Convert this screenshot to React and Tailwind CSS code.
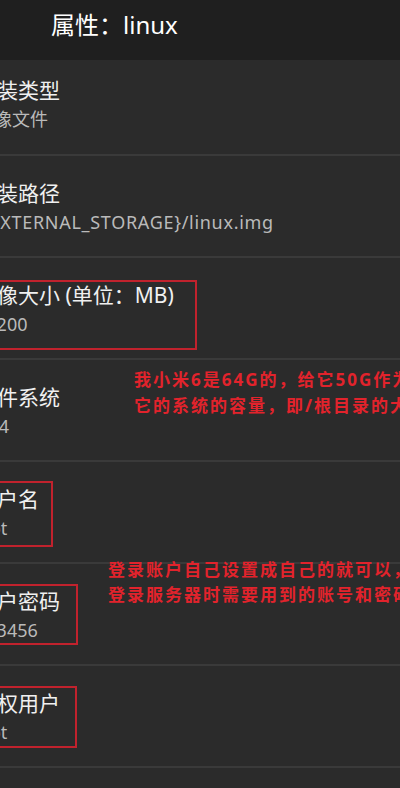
import React from 'react';

const FONT = { fontFamily: '"Noto Sans", "Noto Sans CJK SC", sans-serif' };

const rows = [
  { title: '安装类型', value: '镜像文件', first: true },
  { title: '安装路径', value: '${EXTERNAL_STORAGE}/linux.img', vx: 'ml-[-5px] tracking-[0.7px]' },
  { title: '镜像大小 (单位：MB)', value: '51200', box: 'top-[22px] h-[70px] w-[227px]' },
  { title: '文件系统', value: 'ext4', vx: 'ml-[-3px]' },
  { title: '用户名', value: 'root', vx: 'ml-[-4px]', box: 'top-[19px] h-[66px] w-[83px]' },
  { title: '用户密码', value: '123456', box: 'top-[20px] h-[61px] w-[108px]' },
  { title: '特权用户', value: 'root', vx: 'ml-[-4px]', box: 'top-[20px] h-[62px] w-[107px]' },
];

function Row({ title, value, first, box, vx = '' }) {
  return (
    <div className={first ? 'relative h-[94px] pt-[17px]' : 'relative h-[100px] pt-[24px]'}>
      <div className="ml-[-24px] flex flex-col gap-1">
        <div className="text-[21px] leading-[26px] text-[#f0f0f0] whitespace-nowrap">{title}</div>
        <div className={`text-[18px] leading-[24px] text-[#bababa] whitespace-nowrap ${vx}`}>{value}</div>
      </div>
      {box && <div className={`absolute left-[-30px] border-2 border-[#c1222d] ${box}`} />}
    </div>
  );
}

export default function App() {
  return (
    <div className="relative w-[400px] h-[788px] overflow-hidden bg-[#2b2b2b]" style={FONT}>
      {/* toolbar */}
      <div className="relative h-[60px] bg-[#1f1f1f] flex items-center">
        <svg className="absolute left-[-19px] top-[13px]" width="22" height="22" viewBox="0 0 24 24" fill="none" stroke="#cfcfcf" strokeWidth="2">
          <path d="M20 12H4M11 5l-7 7 7 7" />
        </svg>
        <div className="ml-[51px] -mt-[11px] text-[24px] text-white whitespace-nowrap">属性：linux</div>
      </div>

      <div className="flex flex-col">
        {rows.map((r, i) => (
          <React.Fragment key={r.title}>
            {i > 0 && <div className="h-[2px] bg-[#3a3a3a]" />}
            <Row {...r} />
          </React.Fragment>
        ))}
        <div className="h-[2px] bg-[#3a3a3a]" />
        <div className="h-[30px]" />
      </div>

      {/* red notes */}
      <div className="absolute left-[134px] top-[367px] text-[17px] leading-[26px] font-bold tracking-[2px] text-[#e2232c] whitespace-nowrap">
        <div>我小米6是64G的，给它50G作为</div>
        <div>它的系统的容量，即/根目录的大小</div>
      </div>
      <div className="absolute left-[108px] top-[557px] text-[17px] leading-[25px] font-bold tracking-[2px] text-[#e2232c] whitespace-nowrap">
        <div>登录账户自己设置成自己的就可以，</div>
        <div>登录服务器时需要用到的账号和密码</div>
      </div>
    </div>
  );
}
